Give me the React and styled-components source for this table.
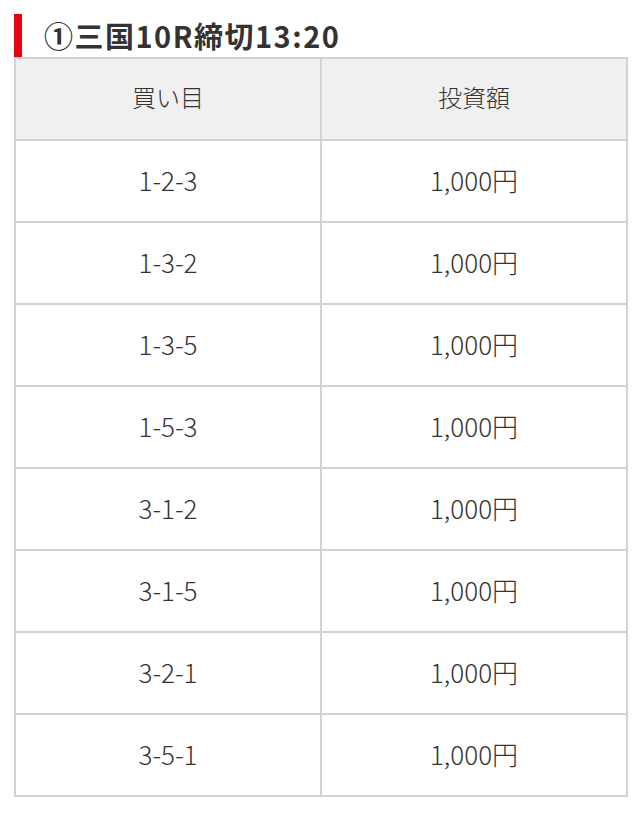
import React from 'react';
import styled, { createGlobalStyle } from 'styled-components';

const GlobalStyle = createGlobalStyle`
  body {
    margin: 0;
    background: #fff;
    font-family: "Noto Sans CJK JP", "Noto Sans", sans-serif;
    color: #333;
  }
`;

const Page = styled.div`
  padding: 14px 12px 0 14px;
`;

const Title = styled.h2`
  margin: 0;
  height: 43px;
  display: flex;
  align-items: center;
  border-left: 8px solid #e50012;
  padding-left: 22px;
  font-size: 29px;
  font-weight: 700;
  color: #333;
  letter-spacing: 1.5px;
  line-height: 1;
`;

const Table = styled.table`
  width: 100%;
  border-collapse: collapse;
  table-layout: fixed;
`;

const Cell = styled.td`
  border: 2px solid #d2d2d2;
  height: 77px;
  padding: 0 0 3px;
  text-align: center;
  vertical-align: middle;
  font-size: 26px;
  font-weight: 300;
  line-height: 1.2;
  color: #333;
  background: ${(p) => (p.$head ? '#f0f0f0' : '#fff')};
`;

const HeadCell = styled(Cell).attrs({ as: 'th' })`
  font-size: 24px;
`;

const bets = ['1-2-3', '1-3-2', '1-3-5', '1-5-3', '3-1-2', '3-1-5', '3-2-1', '3-5-1'];

export default function App() {
  return (
    <Page>
      <GlobalStyle />
      <Title>①三国10R締切13:20</Title>
      <Table>
        <thead>
          <tr>
            <HeadCell $head>買い目</HeadCell>
            <HeadCell $head>投資額</HeadCell>
          </tr>
        </thead>
        <tbody>
          {bets.map((b) => (
            <tr key={b}>
              <Cell>{b}</Cell>
              <Cell>1,000円</Cell>
            </tr>
          ))}
        </tbody>
      </Table>
    </Page>
  );
}
